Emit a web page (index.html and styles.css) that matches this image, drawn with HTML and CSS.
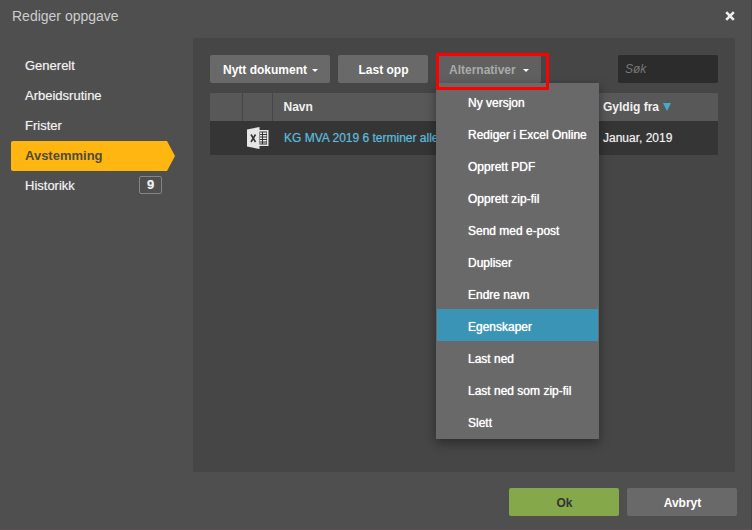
FILE: index.html
```html
<!DOCTYPE html>
<html lang="no">
<head>
    <meta charset="UTF-8">
    <meta name="viewport" content="width=device-width, initial-scale=1.0">
    <title>Rediger oppgave</title>
    <link rel="stylesheet" href="styles.css">
</head>
<body>
    <div class="dialog">
        <header class="dialog-header">
            <h1>Rediger oppgave</h1>
            <button type="button" class="close-btn" aria-label="Lukk">
                <svg width="10" height="10" viewBox="0 0 10 10"><path d="M1.2 1.2l7.6 7.6M8.8 1.2l-7.6 7.6" stroke="#eee" stroke-width="2.6"/></svg>
            </button>
        </header>

        <div class="dialog-body">
            <nav class="side-nav">
                <a href="#generelt">Generelt</a>
                <a href="#arbeidsrutine">Arbeidsrutine</a>
                <a href="#frister">Frister</a>
                <a href="#avstemming" class="active">Avstemming</a>
                <a href="#historikk">Historikk <span class="badge">9</span></a>
            </nav>

            <main class="panel">
                <div class="toolbar">
                    <button type="button" class="btn">Nytt dokument <span class="caret"></span></button>
                    <button type="button" class="btn btn-upload">Last opp</button>
                    <div class="dropdown">
                        <button type="button" class="btn btn-open" aria-expanded="true">Alternativer <span class="caret"></span></button>
                        <ul class="menu">
                            <li><a href="#ny-versjon">Ny versjon</a></li>
                            <li><a href="#excel">Rediger i Excel Online</a></li>
                            <li><a href="#pdf">Opprett PDF</a></li>
                            <li><a href="#zip">Opprett zip-fil</a></li>
                            <li><a href="#epost">Send med e-post</a></li>
                            <li><a href="#dupliser">Dupliser</a></li>
                            <li><a href="#navn">Endre navn</a></li>
                            <li><a href="#egenskaper" class="selected">Egenskaper</a></li>
                            <li><a href="#last-ned">Last ned</a></li>
                            <li><a href="#last-ned-zip">Last ned som zip-fil</a></li>
                            <li><a href="#slett">Slett</a></li>
                        </ul>
                        <div class="highlight"></div>
                    </div>
                    <input type="search" class="search" placeholder="Søk" aria-label="Søk">
                </div>

                <table class="documents">
                    <thead>
                        <tr>
                            <th class="col-select"></th>
                            <th class="col-type"></th>
                            <th>Navn</th>
                            <th class="col-date">Gyldig fra <svg class="sort" width="8" height="8" viewBox="0 0 8 8"><path d="M0 0h8L4 8z" fill="#4aa8cb"/></svg></th>
                        </tr>
                    </thead>
                    <tbody>
                        <tr>
                            <td></td>
                            <td class="col-type">
                                <svg width="22" height="22" viewBox="0 0 22 22">
                                    <path d="M12 3h9.5v16H12z" fill="#e6e6e6"/>
                                    <path d="M12 4.5h8v13h-8z" fill="#353535"/>
                                    <path d="M13 5.5h2v1.5h-2zM16 5.5h3.5v1.5h-3.5zM13 8h2v1.5h-2zM16 8h3.5v1.5h-3.5zM13 10.5h2v1.5h-2zM16 10.5h3.5v1.5h-3.5zM13 13h2v1.5h-2zM16 13h3.5v1.5h-3.5zM13 15.5h2v1h-2zM16 15.5h3.5v1h-3.5z" fill="#e6e6e6"/>
                                    <path d="M0 2.5L12.5 0v22L0 19.5z" fill="#e6e6e6"/>
                                    <path d="M4 7.5l4.5 7.5M8.5 7.5L4 15" stroke="#353535" stroke-width="1.6"/>
                                </svg>
                            </td>
                            <td class="name"><a href="#dokument">KG MVA 2019 6 terminer alle</a></td>
                            <td class="col-date">Januar, 2019</td>
                        </tr>
                    </tbody>
                </table>
            </main>
        </div>

        <footer class="dialog-footer">
            <button type="button" class="btn btn-ok">Ok</button>
            <button type="button" class="btn btn-cancel">Avbryt</button>
        </footer>
    </div>
</body>
</html>
```
FILE: styles.css
```css
* {
    box-sizing: border-box;
}

body {
    margin: 0;
    background-color: #4f4f4f;
    color: #f0f0f0;
    font-family: "Liberation Sans", Arial, sans-serif;
    font-size: 12px;
}

a {
    color: inherit;
    text-decoration: none;
}

.dialog {
    display: flex;
    flex-direction: column;
    min-height: 100vh;
    padding-right: 16px;
    border-right: 1px solid #454545;
    border-bottom: 1px solid #5d5054;
}

.dialog-header {
    display: flex;
    align-items: center;
    justify-content: space-between;
    height: 38px;
    padding: 0 0 6px 12px;
}

h1 {
    margin: 0;
    color: #ccc;
    font-size: 14px;
    font-weight: normal;
}

.close-btn {
    display: flex;
    padding: 0;
    border: none;
    background: none;
    cursor: pointer;
}

.dialog-body {
    display: flex;
    flex: 1;
}

/* Side navigation */
.side-nav {
    width: 193px;
    padding: 13px 18px 0 11px;
    font-size: 13px;
}

.side-nav a {
    display: flex;
    align-items: center;
    justify-content: space-between;
    height: 30px;
    padding: 0 13px 2px 14px;
    text-shadow: 0 0 1px rgba(255, 255, 255, 0.5);
}

.side-nav .active {
    border-radius: 2px;
    background-color: #ffb610;
    color: #504b3a;
    font-weight: bold;
    text-shadow: none;
    clip-path: polygon(0 0, calc(100% - 8px) 0, 100% 50%, calc(100% - 8px) 100%, 0 100%);
}

.badge {
    width: 23px;
    border: 1px solid #858585;
    border-radius: 2px;
    font-weight: bold;
    line-height: 16px;
    text-align: center;
}

/* Content */
.panel {
    flex: 1;
    padding: 17px;
    border-radius: 2px;
    background-color: #464646;
}

.toolbar {
    display: flex;
    gap: 8px;
    margin-bottom: 10px;
}

.btn {
    display: flex;
    align-items: center;
    justify-content: center;
    gap: 5px;
    height: 28px;
    padding: 2px 12px 0 13px;
    border: none;
    border-radius: 2px;
    background-color: #696969;
    color: #fff;
    font-family: inherit;
    font-size: 12px;
    font-weight: bold;
    cursor: pointer;
}

.btn-upload {
    width: 90px;
}

.btn-open {
    gap: 7px;
    background-color: #606060;
    color: #aaa;
}

.caret {
    border: 3px solid transparent;
    border-top-color: #fff;
    border-bottom: none;
}

.dropdown {
    position: relative;
}

.menu {
    position: absolute;
    z-index: 1;
    top: 28px;
    left: 0;
    width: 163px;
    margin: 0;
    padding: 2px 1px;
    background-color: #696969;
    box-shadow: 0 4px 10px rgba(0, 0, 0, 0.4);
    list-style: none;
}

.menu a {
    display: block;
    padding: 4px 0 0 31px;
    color: #fff;
    line-height: 28px;
    text-shadow: 0 0 1px #fff;
    white-space: nowrap;
}

.menu .selected {
    background-color: #3a94b6;
}

/* Red frame around the open drop-down button */
.highlight {
    position: absolute;
    z-index: 2;
    top: -2px;
    left: 0;
    width: 113px;
    height: 37px;
    border: 3px solid #f00;
    border-radius: 1px;
    pointer-events: none;
}

.search {
    width: 100px;
    height: 28px;
    margin-left: auto;
    padding: 0 7px;
    border: none;
    border-radius: 2px;
    background-color: #2c2c2c;
    color: #fff;
    font-family: inherit;
    font-size: 12px;
}

.search::placeholder {
    color: #777;
    font-style: italic;
}

/* Document list */
.documents {
    width: 100%;
    border-collapse: collapse;
    table-layout: fixed;
}

.documents th {
    height: 28px;
    padding: 0 0 0 11px;
    background-color: #585858;
    text-align: left;
}

.documents td {
    height: 34px;
    padding: 0 0 0 11px;
    background-color: #353535;
    text-shadow: 0 0 1px rgba(255, 255, 255, 0.5);
}

.documents .col-select {
    width: 32px;
    border-right: 1px solid #464646;
}

.documents .col-type {
    width: 30px;
    padding: 0 0 0 5px;
}

.documents th.col-type {
    border-right: 1px solid #464646;
}

.documents .col-type svg {
    display: block;
}

.documents .col-date {
    width: 115px;
    padding-left: 0;
}

.documents .name {
    padding-left: 12px;
    color: #5cb8d8;
    text-shadow: 0 0 1px rgba(92, 184, 216, 0.6);
    white-space: nowrap;
}

.sort {
    margin-left: 1px;
}

/* Footer */
.dialog-footer {
    display: flex;
    justify-content: flex-end;
    gap: 8px;
    padding: 16px 0 13px;
    margin-right: -2px;
}

.dialog-footer .btn {
    width: 110px;
}

.dialog-footer .btn-ok {
    background-color: #84a84a;
    color: #333;
}
```
